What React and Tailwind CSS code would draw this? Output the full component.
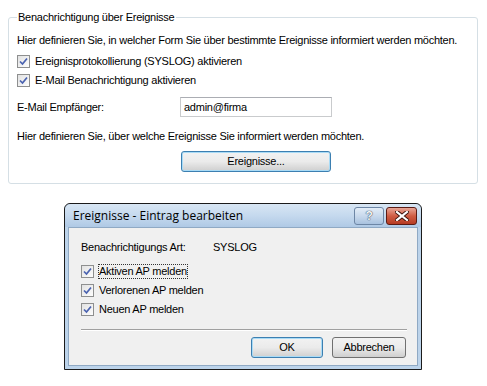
import React from 'react';

function Check({ checked = true, focus = false, label }) {
    return (
        <label className="flex items-center gap-[5px] h-[13px]">
            <span className="relative w-[13px] h-[13px] border border-[#8e8f8f] bg-gradient-to-br from-[#e2e2e2] to-[#fdfdfd] flex items-center justify-center">
                {checked && (
                    <svg width="9" height="9" viewBox="0 0 9 9">
                        <path d="M1 4.5 L3.5 7 L8 1.5" fill="none" stroke="#4a62b0" strokeWidth="1.7" />
                    </svg>
                )}
            </span>
            <span className={focus ? 'outline outline-1 outline-dotted outline-[#333] leading-[13px]' : 'leading-[13px]'}>{label}</span>
        </label>
    );
}

function App() {
    return (
        <div className="w-[487px] h-[386px] bg-white text-[11px] tracking-[-0.25px] whitespace-nowrap text-black overflow-hidden" style={{ fontFamily: '"Liberation Sans", Arial, sans-serif' }}>
            <fieldset className="ml-[8px] mt-[10px] w-[470px] h-[174px] border border-[#d5dfe5] rounded-[3px] pl-[8px] pr-[8px]">
                <legend className="ml-[0px] px-[1px] leading-[14px]">Benachrichtigung über Ereignisse</legend>
                <p className="mt-[9px] leading-[14px]">Hier definieren Sie, in welcher Form Sie über bestimmte Ereignisse informiert werden möchten.</p>
                <div className="mt-[8px] flex flex-col gap-[6px]">
                    <Check label="Ereignisprotokollierung (SYSLOG) aktivieren" />
                    <Check label="E-Mail Benachrichtigung aktivieren" />
                </div>
                <div className="mt-[10px] flex items-center h-[20px]">
                    <span className="w-[163px]">E-Mail Empfänger:</span>
                    <div className="w-[152px] h-[20px] border border-[#c9cbcd] border-t-[#abadb3] px-[3px] flex items-center">admin@firma</div>
                </div>
                <p className="mt-[12px] leading-[14px]">Hier definieren Sie, über welche Ereignisse Sie informiert werden möchten.</p>
                <div className="mt-[8px] ml-[164px] w-[150px] h-[21px] rounded-[3px] border border-[#3c7fb1] bg-gradient-to-b from-[#f2f2f2] via-[#ebebeb] to-[#cfcfcf] flex items-center justify-center shadow-[inset_0_0_0_1px_#a9dbf6]">
                    Ereignisse...
                </div>
            </fieldset>

            <div className="ml-[64px] mt-[19px] w-[358px] h-[167px] border border-[#1b1b1b] rounded-t-[6px] bg-[#bcd3ea] flex flex-col">
                <div className="h-[23px] flex items-center justify-between pl-[8px] pr-[4px] rounded-t-[6px] bg-gradient-to-b from-[#d8e6f4] via-[#c5d9ee] to-[#afc9e5]">
                    <span className="text-[12px] tracking-normal" style={{ fontFamily: '"Open Sans", "Liberation Sans", sans-serif' }}>Ereignisse - Eintrag bearbeiten</span>
                    <div className="flex gap-[2px] mt-[1px]">
                        <div className="w-[30px] h-[18px] rounded-[3px] border border-[#6d86a5] bg-gradient-to-b from-[#e3edf7] via-[#c8d9ec] to-[#a9c2df] flex items-center justify-center text-[12px] font-bold text-[#f5f5f5]" style={{ textShadow: '0 0 1px #2b3d59, 0 0 1px #2b3d59' }}>?</div>
                        <div className="w-[31px] h-[18px] rounded-[3px] border border-[#5a1b14] bg-gradient-to-b from-[#e7a596] via-[#cf5c43] to-[#b63b23] flex items-center justify-center">
                            <svg width="14" height="10" viewBox="0 0 14 10">
                                <path d="M2 1 L12 9 M12 1 L2 9" stroke="#3a120c" strokeWidth="4" strokeLinecap="square" />
                                <path d="M2 1 L12 9 M12 1 L2 9" stroke="#ffffff" strokeWidth="2.2" strokeLinecap="square" />
                            </svg>
                        </div>
                    </div>
                </div>
                <div className="flex-1 mx-[3px] mb-[3px] bg-[#f0f0f0] border border-[#8fa9c4] flex flex-col pl-[12px] pr-[10px]">
                    <div className="mt-[12px] flex leading-[14px]">
                        <span className="w-[132px]">Benachrichtigungs Art:</span>
                        <span>SYSLOG</span>
                    </div>
                    <div className="mt-[11px] flex flex-col gap-[6px]">
                        <Check label="Aktiven AP melden" focus />
                        <Check label="Verlorenen AP melden" />
                        <Check label="Neuen AP melden" />
                    </div>
                    <div className="mt-[13px] border-t border-[#a0a0a0] border-b-[#ffffff] border-b h-0" />
                    <div className="mt-[6px] flex justify-end gap-[9px] pr-[1px]">
                        <div className="w-[72px] h-[21px] rounded-[3px] border border-[#3c7fb1] bg-gradient-to-b from-[#f2f2f2] via-[#ebebeb] to-[#cfcfcf] flex items-center justify-center shadow-[inset_0_0_0_1px_#a9dbf6]">OK</div>
                        <div className="w-[74px] h-[21px] rounded-[3px] border border-[#707070] bg-gradient-to-b from-[#f2f2f2] via-[#ebebeb] to-[#cfcfcf] flex items-center justify-center">Abbrechen</div>
                    </div>
                </div>
            </div>
        </div>
    );
}

export default App;
